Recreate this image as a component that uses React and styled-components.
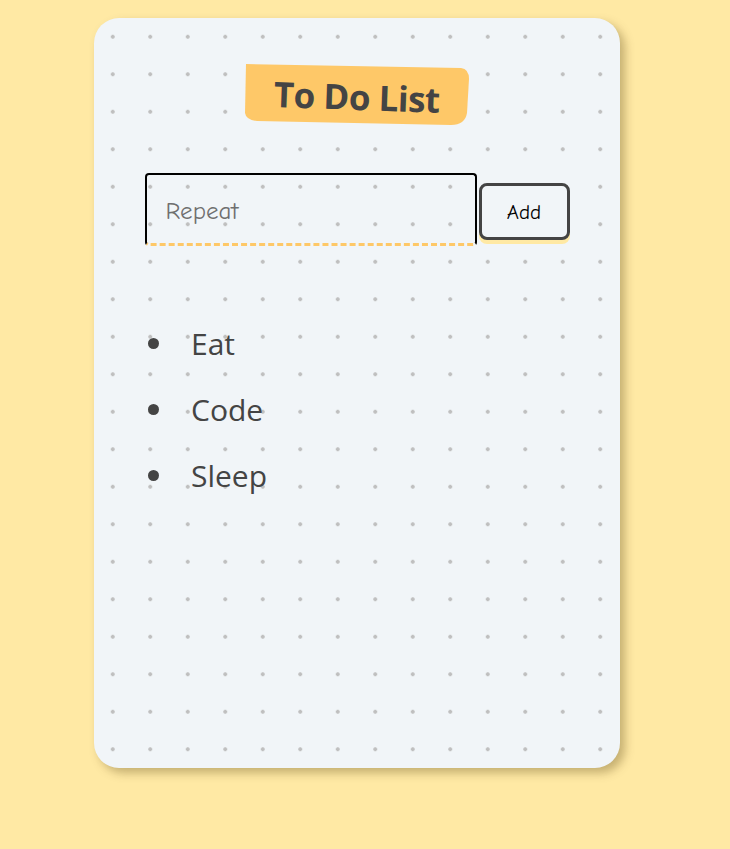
import React from "react";
import styled, { createGlobalStyle } from "styled-components";

const Global = createGlobalStyle`
  html, body { margin: 0; padding: 0; background: #ffe9a4; }
  body { font-family: "Open Sans", "Noto Sans", sans-serif; }
`;

const Page = styled.div`
  min-height: 849px;
  padding: 18px 0 0 94px;
  box-sizing: border-box;
`;

const Card = styled.div`
  width: 526px;
  height: 750px;
  box-sizing: border-box;
  border-radius: 25px;
  background-color: #f1f5f8;
  background-image: radial-gradient(circle at center, #bfbfbf 1.6px, transparent 2.2px);
  background-size: 37.5px 37.5px;
  box-shadow: 5px 5px 10px rgba(90, 70, 20, 0.35);
  display: flex;
  flex-direction: column;
  align-items: center;
  padding-top: 45px;
`;

const Heading = styled.h1`
  margin: 0;
  width: 224px;
  height: 62px;
  display: flex;
  align-items: center;
  justify-content: center;
  position: relative;
  font-size: 35px;
  font-weight: 700;
  color: #444;
  letter-spacing: -0.5px;
  span { position: relative; transform: rotate(2deg); display: inline-block; margin-top: 4px; }
`;

const Blob = styled.svg`
  position: absolute;
  inset: 0;
  width: 100%;
  height: 100%;
`;

const InputRow = styled.div`
  margin-top: 48px;
  display: flex;
  align-items: flex-start;
  gap: 2px;
`;

const TextInput = styled.input`
  width: 332px;
  height: 73px;
  box-sizing: border-box;
  border: 2px solid #000;
  border-bottom: 3px dashed #fec868;
  border-radius: 4px;
  background: transparent;
  padding: 2px 0 0 19px;
  font-family: "Comic Neue", "Comic Sans MS", "DejaVu Sans", sans-serif;
  font-size: 25px;
  color: #6f6f6f;
  outline: none;
`;

const AddButton = styled.button`
  margin-top: 10px;
  width: 91px;
  height: 57px;
  box-sizing: border-box;
  border: 3px solid #444;
  border-radius: 8px;
  background: #f1f5f8;
  box-shadow: 0 4px 0 #ffe9a4;
  font-family: "Comic Neue", "Comic Sans MS", "DejaVu Sans", sans-serif;
  font-size: 21px;
  font-weight: 400;
  color: #000;
  padding: 0;
`;

const List = styled.ul`
  list-style: none;
  margin: 75px 0 0 0;
  padding: 0;
  align-self: flex-start;
  margin-left: 54px;
  display: flex;
  flex-direction: column;
  gap: 22px;
`;

const Item = styled.li`
  display: flex;
  align-items: center;
  height: 44px;
  font-size: 30px;
  color: #444;
  &::before {
    content: "";
    width: 11px;
    height: 11px;
    border-radius: 50%;
    background: #444;
    margin-right: 32px;
  }
`;

export default function App() {
  return (
    <>
      <Global />
      <Page>
        <Card>
          <Heading>
            <Blob viewBox="0 0 224 62" preserveAspectRatio="none">
              <path
                d="M1 1 L216 5 Q224 6 224 16 L222 50 Q220 62 206 62 L12 58 Q1 57 0 50 Z"
                fill="#fec868"
              />
            </Blob>
            <span>To Do List</span>
          </Heading>
          <InputRow>
            <TextInput defaultValue="Repeat" />
            <AddButton>Add</AddButton>
          </InputRow>
          <List>
            <Item>Eat</Item>
            <Item>Code</Item>
            <Item>Sleep</Item>
          </List>
        </Card>
      </Page>
    </>
  );
}
